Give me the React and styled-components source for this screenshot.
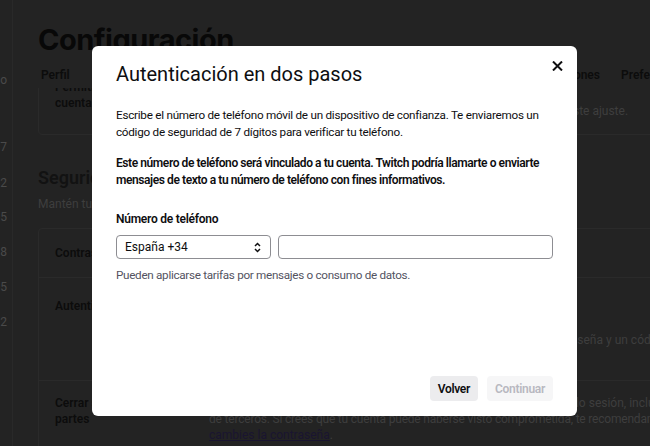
import React from "react";
import styled, { createGlobalStyle } from "styled-components";

const Global = createGlobalStyle`
  html, body { margin: 0; padding: 0; background: #232323; }
  body { font-family: Roboto, "Noto Sans", sans-serif; }
  * { box-sizing: border-box; }
`;

const Page = styled.div`
  width: 650px;
  height: 446px;
  overflow: hidden;
  background: #232323;
  display: flex;
`;

const Sidebar = styled.div`
  width: 13px;
  flex: none;
  border-right: 1px solid #292929;
  overflow: hidden;
  display: flex;
  flex-direction: column;
  align-items: flex-end;
  padding-top: 72px;
`;

const SideNum = styled.div`
  font-size: 12px;
  color: #4a4a4a;
  height: 16px;
  line-height: 16px;
  margin-top: ${(p) => p.$gap}px;
  margin-right: 5px;
  white-space: nowrap;
`;

const Main = styled.div`
  flex: 1;
  padding: 22px 0 0 25px;
  display: flex;
  flex-direction: column;
  min-width: 0;
  & > * {
    flex-shrink: 0;
  }
`;

const PageTitle = styled.h1`
  margin: 0;
  font-family: Inter, Roboto, sans-serif;
  font-size: 29px;
  font-weight: 700;
  letter-spacing: -0.5px;
  color: #080808;
  line-height: 36px;
`;

const Tabs = styled.div`
  display: flex;
  width: 562px;
  padding: 10px 0 0 3px;
  height: 30px;
  font-size: 12px;
  font-weight: 600;
  color: #0c0c0c;
  white-space: nowrap;
`;

const TabSpacer = styled.div`
  flex: 1;
`;

const TabOverflow = styled.div`
  width: 0;
  overflow: visible;
  & > span {
    margin-left: 21px;
  }
`;

const Clip = styled.div`
  overflow: hidden;
  height: 47px;
  margin-right: -20px;
`;

const Card = styled.div`
  border: 1px solid #2a2a2a;
  border-radius: 4px;
  margin-right: -20px;
  display: flex;
  flex-direction: column;
  margin-top: ${(p) => p.$mt || 0}px;
  height: ${(p) => (p.$h ? `${p.$h}px` : "auto")};
`;

const Row = styled.div`
  display: flex;
  padding: ${(p) => p.$pad || "16px 16px"};
  border-top: ${(p) => (p.$sep ? "1px solid #2a2a2a" : "none")};
  min-height: ${(p) => p.$h || 0}px;
`;

const RowLabel = styled.div`
  width: 154px;
  flex: none;
  font-size: 12px;
  font-weight: 600;
  color: #0c0c0c;
  line-height: 16px;
  white-space: nowrap;
`;

const RowText = styled.div`
  flex: 1;
  font-size: 12px;
  color: #3e3e3e;
  line-height: 16px;
  white-space: nowrap;
  padding-top: ${(p) => p.$pt || 0}px;
`;

const Tight = styled.span`
  letter-spacing: -0.2px;
`;

const Link = styled.span`
  text-decoration: underline;
  color: #1a1530;
`;

const SectionTitle = styled.h2`
  margin: 32px 0 0;
  font-size: 18px;
  font-weight: 600;
  color: #121212;
  line-height: 22px;
`;

const SectionSub = styled.div`
  font-size: 12px;
  color: #3e3e3e;
  line-height: 16px;
  margin: 7px 0 0;
`;

const Overlay = styled.div`
  position: fixed;
  inset: 0;
  padding: 46px 0 0 92px;
`;

const Modal = styled.div`
  width: 485px;
  height: 370px;
  background: #fff;
  border-radius: 6px;
  padding: 15px 24px 15px;
  display: flex;
  flex-direction: column;
  color: #0e0e10;
  font-family: Roboto, "Noto Sans", sans-serif;
`;

const Header = styled.div`
  display: flex;
  justify-content: space-between;
  align-items: flex-start;
`;

const Title = styled.h3`
  margin: 0;
  font-size: 20px;
  font-weight: 400;
  line-height: 26px;
`;

const Close = styled.button`
  border: 0;
  background: none;
  padding: 0;
  margin: -1px -10px 0 0;
  width: 12px;
  height: 12px;
  display: flex;
  align-items: center;
  justify-content: center;
  cursor: pointer;
`;

const Para = styled.p`
  margin: ${(p) => p.$mt}px 0 0;
  font-size: ${(p) => (p.$bold ? "12px" : "11.7px")};
  line-height: 17px;
  font-weight: ${(p) => (p.$bold ? 600 : 400)};
  letter-spacing: ${(p) => (p.$bold ? "-0.42px" : "-0.25px")};
`;

const Label = styled.div`
  margin-top: 22px;
  font-size: 12px;
  font-weight: 600;
  line-height: 16px;
  letter-spacing: -0.25px;
`;

const Fields = styled.div`
  display: flex;
  gap: 7px;
  margin-top: 8px;
`;

const Select = styled.div`
  width: 155px;
  height: 24px;
  border: 1px solid #8d8d92;
  border-radius: 4px;
  display: flex;
  align-items: center;
  justify-content: space-between;
  padding: 0 9px 0 8px;
  font-size: 12px;
`;

const Input = styled.input`
  flex: 1;
  height: 24px;
  border: 1px solid #8d8d92;
  border-radius: 4px;
  outline: none;
  font: inherit;
`;

const Help = styled.div`
  margin-top: 8px;
  font-size: 11.7px;
  color: #53535f;
  line-height: 16px;
  letter-spacing: -0.3px;
`;

const Footer = styled.div`
  margin-top: auto;
  display: flex;
  justify-content: flex-end;
  gap: 9px;
`;

const Button = styled.button`
  height: 25px;
  padding: 0 8px;
  border: 0;
  border-radius: 4px;
  font-family: inherit;
  font-size: 12px;
  font-weight: 600;
  letter-spacing: -0.3px;
  background: ${(p) => (p.$disabled ? "#f6f6f7" : "#ececee")};
  color: ${(p) => (p.$disabled ? "#b8b8c0" : "#0e0e10")};
`;

export default function App() {
  return (
    <>
      <Global />
      <Page>
        <Sidebar>
          <SideNum $gap={0}>o</SideNum>
          <SideNum $gap={51}>7</SideNum>
          <SideNum $gap={20}>2</SideNum>
          <SideNum $gap={18}>5</SideNum>
          <SideNum $gap={19}>8</SideNum>
          <SideNum $gap={19}>5</SideNum>
          <SideNum $gap={19}>2</SideNum>
        </Sidebar>
        <Main>
          <PageTitle>Configuración</PageTitle>
          <Tabs>
            <span>Perfil</span>
            <TabSpacer />
            <span>Conexiones</span>
            <TabOverflow>
              <span>Preferencias</span>
            </TabOverflow>
          </Tabs>
          <Clip>
            <Card $mt={-10} $h={57}>
              <Row $pad="0 16px">
                <RowLabel>
                  Permitir cambios en la
                  <br />
                  cuenta
                </RowLabel>
                <RowText $pt={24}>
                  Activa esta opción para que otras personas puedan ver y modificar este ajuste.
                </RowText>
              </Row>
            </Card>
          </Clip>
          <SectionTitle>Seguridad</SectionTitle>
          <SectionSub>Mantén tu cuenta segura</SectionSub>
          <Card $mt={16}>
            <Row $pad="16px 16px" $h={48}>
              <RowLabel>Contraseña</RowLabel>
              <RowText></RowText>
            </Row>
            <Row $pad="20px 16px 32px" $sep>
              <RowLabel>Autenticación en dos pasos</RowLabel>
              <RowText $pt={34}>
                Añade una capa adicional de seguridad al iniciar sesión con tu contraseña y un código
                de verificación
              </RowText>
            </Row>
            <Row $pad="14px 16px" $sep>
              <RowLabel>
                Cerrar sesión en todas
                <br />
                partes
              </RowLabel>
              <RowText>
                Se cerrará la sesión en todos los dispositivos en los que hayas iniciado sesión, incluidas
                las aplicaciones
                <br />
                <Tight>
                  de terceros. Si crees que tu cuenta puede haberse visto comprometida, te recomendamos
                  que
                </Tight>
                <br />
                <Link>cambies la contraseña</Link>.
              </RowText>
            </Row>
          </Card>
        </Main>
      </Page>
      <Overlay>
        <Modal>
          <Header>
            <Title>Autenticación en dos pasos</Title>
            <Close aria-label="Cerrar">
              <svg width="11" height="10" viewBox="0 0 11 10">
                <path d="M1 0.5L10 9.5M10 0.5L1 9.5" stroke="#0e0e10" strokeWidth="2" />
              </svg>
            </Close>
          </Header>
          <Para $mt={20}>
            Escribe el número de teléfono móvil de un dispositivo de confianza. Te enviaremos un
            código de seguridad de 7 dígitos para verificar tu teléfono.
          </Para>
          <Para $mt={14} $bold>
            Este número de teléfono será vinculado a tu cuenta. Twitch podría llamarte o enviarte
            mensajes de texto a tu número de teléfono con fines informativos.
          </Para>
          <Label>Número de teléfono</Label>
          <Fields>
            <Select>
              <span>España +34</span>
              <svg width="7" height="11" viewBox="0 0 7 11">
                <path d="M1 4L3.5 1.5L6 4M1 7L3.5 9.5L6 7" fill="none" stroke="#0e0e10" strokeWidth="1.5" />
              </svg>
            </Select>
            <Input />
          </Fields>
          <Help>Pueden aplicarse tarifas por mensajes o consumo de datos.</Help>
          <Footer>
            <Button>Volver</Button>
            <Button $disabled>Continuar</Button>
          </Footer>
        </Modal>
      </Overlay>
    </>
  );
}
